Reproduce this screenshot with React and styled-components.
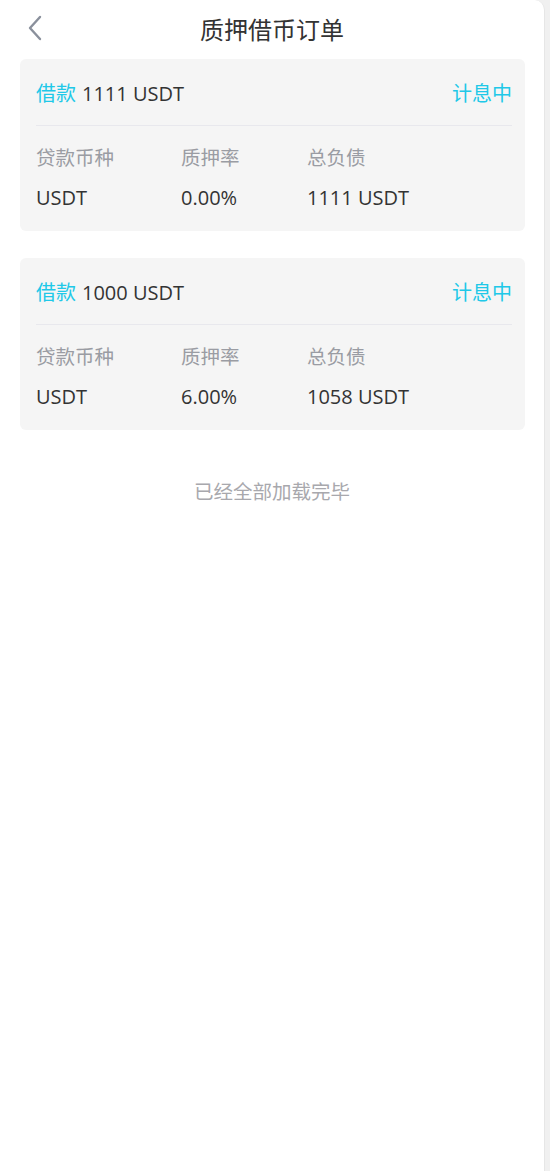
import React from "react";
import styled, { createGlobalStyle } from "styled-components";

const GlobalStyle = createGlobalStyle`
    html, body {
        margin: 0;
        padding: 0;
        background: #f0f0f0;
    }
    body {
        font-family: "Open Sans", "Noto Sans CJK SC", sans-serif;
    }
`;

const Page = styled.div`
    width: 545px;
    min-height: 1171px;
    background: #ffffff;
    border-top-right-radius: 10px;
    border-right: 1px solid #e6e6e6;
    box-sizing: border-box;
`;

const Header = styled.div`
    position: relative;
    height: 59px;
    display: flex;
    align-items: center;
    justify-content: center;
`;

const BackButton = styled.div`
    position: absolute;
    left: 24px;
    top: 14px;
    width: 22px;
    height: 28px;
    display: flex;
    align-items: center;
    justify-content: center;
`;

const Title = styled.h1`
    margin: 0;
    font-size: 24px;
    font-weight: 400;
    color: #333333;
    line-height: 59px;
`;

const List = styled.div`
    display: flex;
    flex-direction: column;
    gap: 27px;
    padding: 0 19px 0 20px;
`;

const Card = styled.div`
    background: #f5f5f5;
    border-radius: 6px;
    padding: 0 13px 0 16px;
`;

const CardHead = styled.div`
    height: 66px;
    display: flex;
    align-items: center;
    justify-content: space-between;
    border-bottom: 1px solid #e8e8ed;
    font-size: 20px;
    color: #333333;
`;

const Accent = styled.span`
    color: #20c8e8;
    margin-right: ${(props) => (props.gap ? "6px" : "0")};
`;

const CardBody = styled.div`
    display: grid;
    grid-template-columns: 145px 126px auto;
    row-gap: 14px;
    padding: 19px 0 20px 0;
`;

const Label = styled.div`
    font-size: 19.5px;
    line-height: 26px;
    color: #9a9ca3;
`;

const Value = styled.div`
    font-size: 20px;
    line-height: 26px;
    color: #333333;
`;

const Footer = styled.div`
    text-align: center;
    margin-top: 49px;
    font-size: 19.5px;
    line-height: 26px;
    color: #a8a8ad;
`;

const orders = [
    { amount: "1111 USDT", coin: "USDT", rate: "0.00%", debt: "1111 USDT" },
    { amount: "1000 USDT", coin: "USDT", rate: "6.00%", debt: "1058 USDT" },
];

function OrderCard(props) {
    return (
        <Card>
            <CardHead>
                <span>
                    <Accent gap>借款</Accent>
                    {props.amount}
                </span>
                <Accent>计息中</Accent>
            </CardHead>
            <CardBody>
                <Label>贷款币种</Label>
                <Label>质押率</Label>
                <Label>总负债</Label>
                <Value>{props.coin}</Value>
                <Value>{props.rate}</Value>
                <Value>{props.debt}</Value>
            </CardBody>
        </Card>
    );
}

function App() {
    return (
        <Page>
            <GlobalStyle />
            <Header>
                <BackButton>
                    <svg width="16" height="26" viewBox="0 0 16 26" fill="none">
                        <path d="M13 2 L3 13 L13 24" stroke="#8a909c" strokeWidth="2.4" strokeLinecap="round" strokeLinejoin="round" />
                    </svg>
                </BackButton>
                <Title>质押借币订单</Title>
            </Header>
            <List>
                {orders.map((o, i) => (
                    <OrderCard key={i} {...o} />
                ))}
            </List>
            <Footer>已经全部加载完毕</Footer>
        </Page>
    );
}

export default App;
